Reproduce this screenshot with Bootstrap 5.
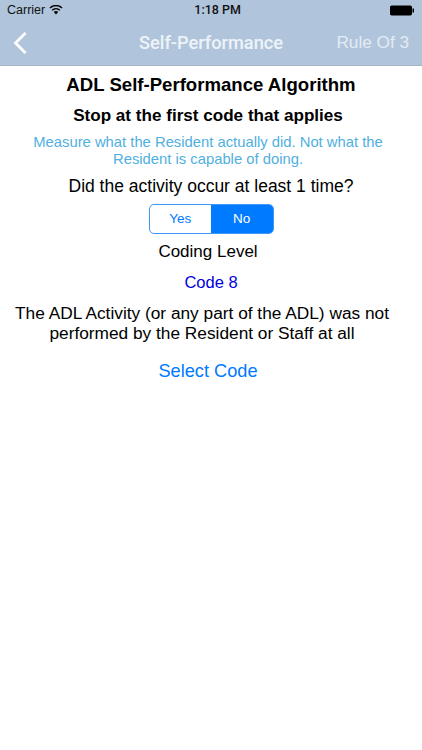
<!DOCTYPE html>
<html lang="en"><head><meta charset="utf-8">
<link href="https://cdn.jsdelivr.net/npm/bootstrap@5.3.0/dist/css/bootstrap.min.css" rel="stylesheet">
<style>
html,body{height:100%;background:#fff}
body{font-family:"Liberation Sans",Arial,sans-serif;color:#000;overflow:hidden}
.hdr{background:#b0c5dc;height:66px;color:#fff;border-bottom:1px solid #a5b5c8}
.stat{height:20px;font-size:12.5px;color:#111;padding:0 7px}
.tm{font-family:Roboto,sans-serif;font-weight:500;font-size:12.5px;padding-right:18px}
.navr{height:46px;padding:0 13px}
.side{flex:1 1 0}
.ttl{font-family:Roboto,sans-serif;font-size:18.2px;font-weight:500;color:#eef3f8}
.rule{font-size:17.2px;color:#e4ebf3}
.t1{font-size:18.6px;font-weight:700;margin-top:8px;line-height:22px}
.t2{font-size:17.1px;font-weight:700;margin-top:10px;line-height:20px;padding-right:6px}
.t3{font-size:14.8px;color:#4fb0e0;margin-top:8px;line-height:17px;padding:0 18px 0 12px}
.t4{font-size:17.5px;margin-top:8px;line-height:20px}
.seg{margin-top:8px;width:125px;height:30px;border:1.5px solid #3f97f8;border-radius:5px;overflow:hidden;font-size:13.5px}
.seg>div{flex:1}
.t5{font-size:17px;margin-top:8px;line-height:20px;padding-right:6px}
.t6{font-size:16.5px;color:#0000e0;margin-top:10px;line-height:20px}
.t7{font-size:17.3px;margin-top:11px;line-height:20px;padding:0 15px}
.t7 span{display:block;white-space:nowrap}
.t8{font-size:18.2px;color:#007aff;margin-top:17px;line-height:22px;padding-right:6px}
</style></head><body>
<div class="hdr">
<div class="stat d-flex align-items-center">
<span>Carrier</span>
<svg class="ms-1" width="14" height="10" viewBox="0 0 14 10"><path d="M7 9.500 4.800 7a3.200 3.200 0 0 1 4.400 0z M3.700 5.800a4.800 4.800 0 0 1 6.600 0l1-1.100a6.300 6.300 0 0 0-8.600 0z M1.500 3.500a8 8 0 0 1 11 0l1-1.100a9.500 9.500 0 0 0-13 0z" fill="#000"/></svg>
<span class="tm flex-grow-1 text-center">1:18 PM</span>
<svg width="25" height="11" viewBox="0 0 25 11"><rect x=".5" y="1" width="21" height="9" rx="1" fill="#000" stroke="#000"/><rect x="22.500" y="3.500" width="1.500" height="4" fill="#000"/></svg>
</div>
<div class="navr d-flex align-items-center">
<div class="side d-flex"><svg width="16" height="24" viewBox="0 0 16 24"><path d="M12.500 2 2.500 12l10 10" fill="none" stroke="#fff" stroke-width="2.800"/></svg></div>
<span class="ttl">Self-Performance</span>
<div class="side text-end"><span class="rule">Rule Of 3</span></div>
</div>
</div>
<div class="text-center d-flex flex-column align-items-center">
<div class="t1">ADL Self-Performance Algorithm</div>
<div class="t2">Stop at the first code that applies</div>
<div class="t3">Measure what the Resident actually did. Not what the Resident is capable of doing.</div>
<div class="t4">Did the activity occur at least 1 time?</div>
<div class="seg d-flex">
<div class="d-flex align-items-center justify-content-center" style="color:#007aff">Yes</div>
<div class="d-flex align-items-center justify-content-center text-white" style="background:#007aff">No</div>
</div>
<div class="t5">Coding Level</div>
<div class="t6">Code 8</div>
<div class="t7 align-self-start"><span>The ADL Activity (or any part of the ADL) was not</span><span>performed by the Resident or Staff at all</span></div>
<div class="t8">Select Code</div>
</div>
<script src="https://cdn.jsdelivr.net/npm/bootstrap@5.3.0/dist/js/bootstrap.bundle.min.js"></script>
</body></html>
